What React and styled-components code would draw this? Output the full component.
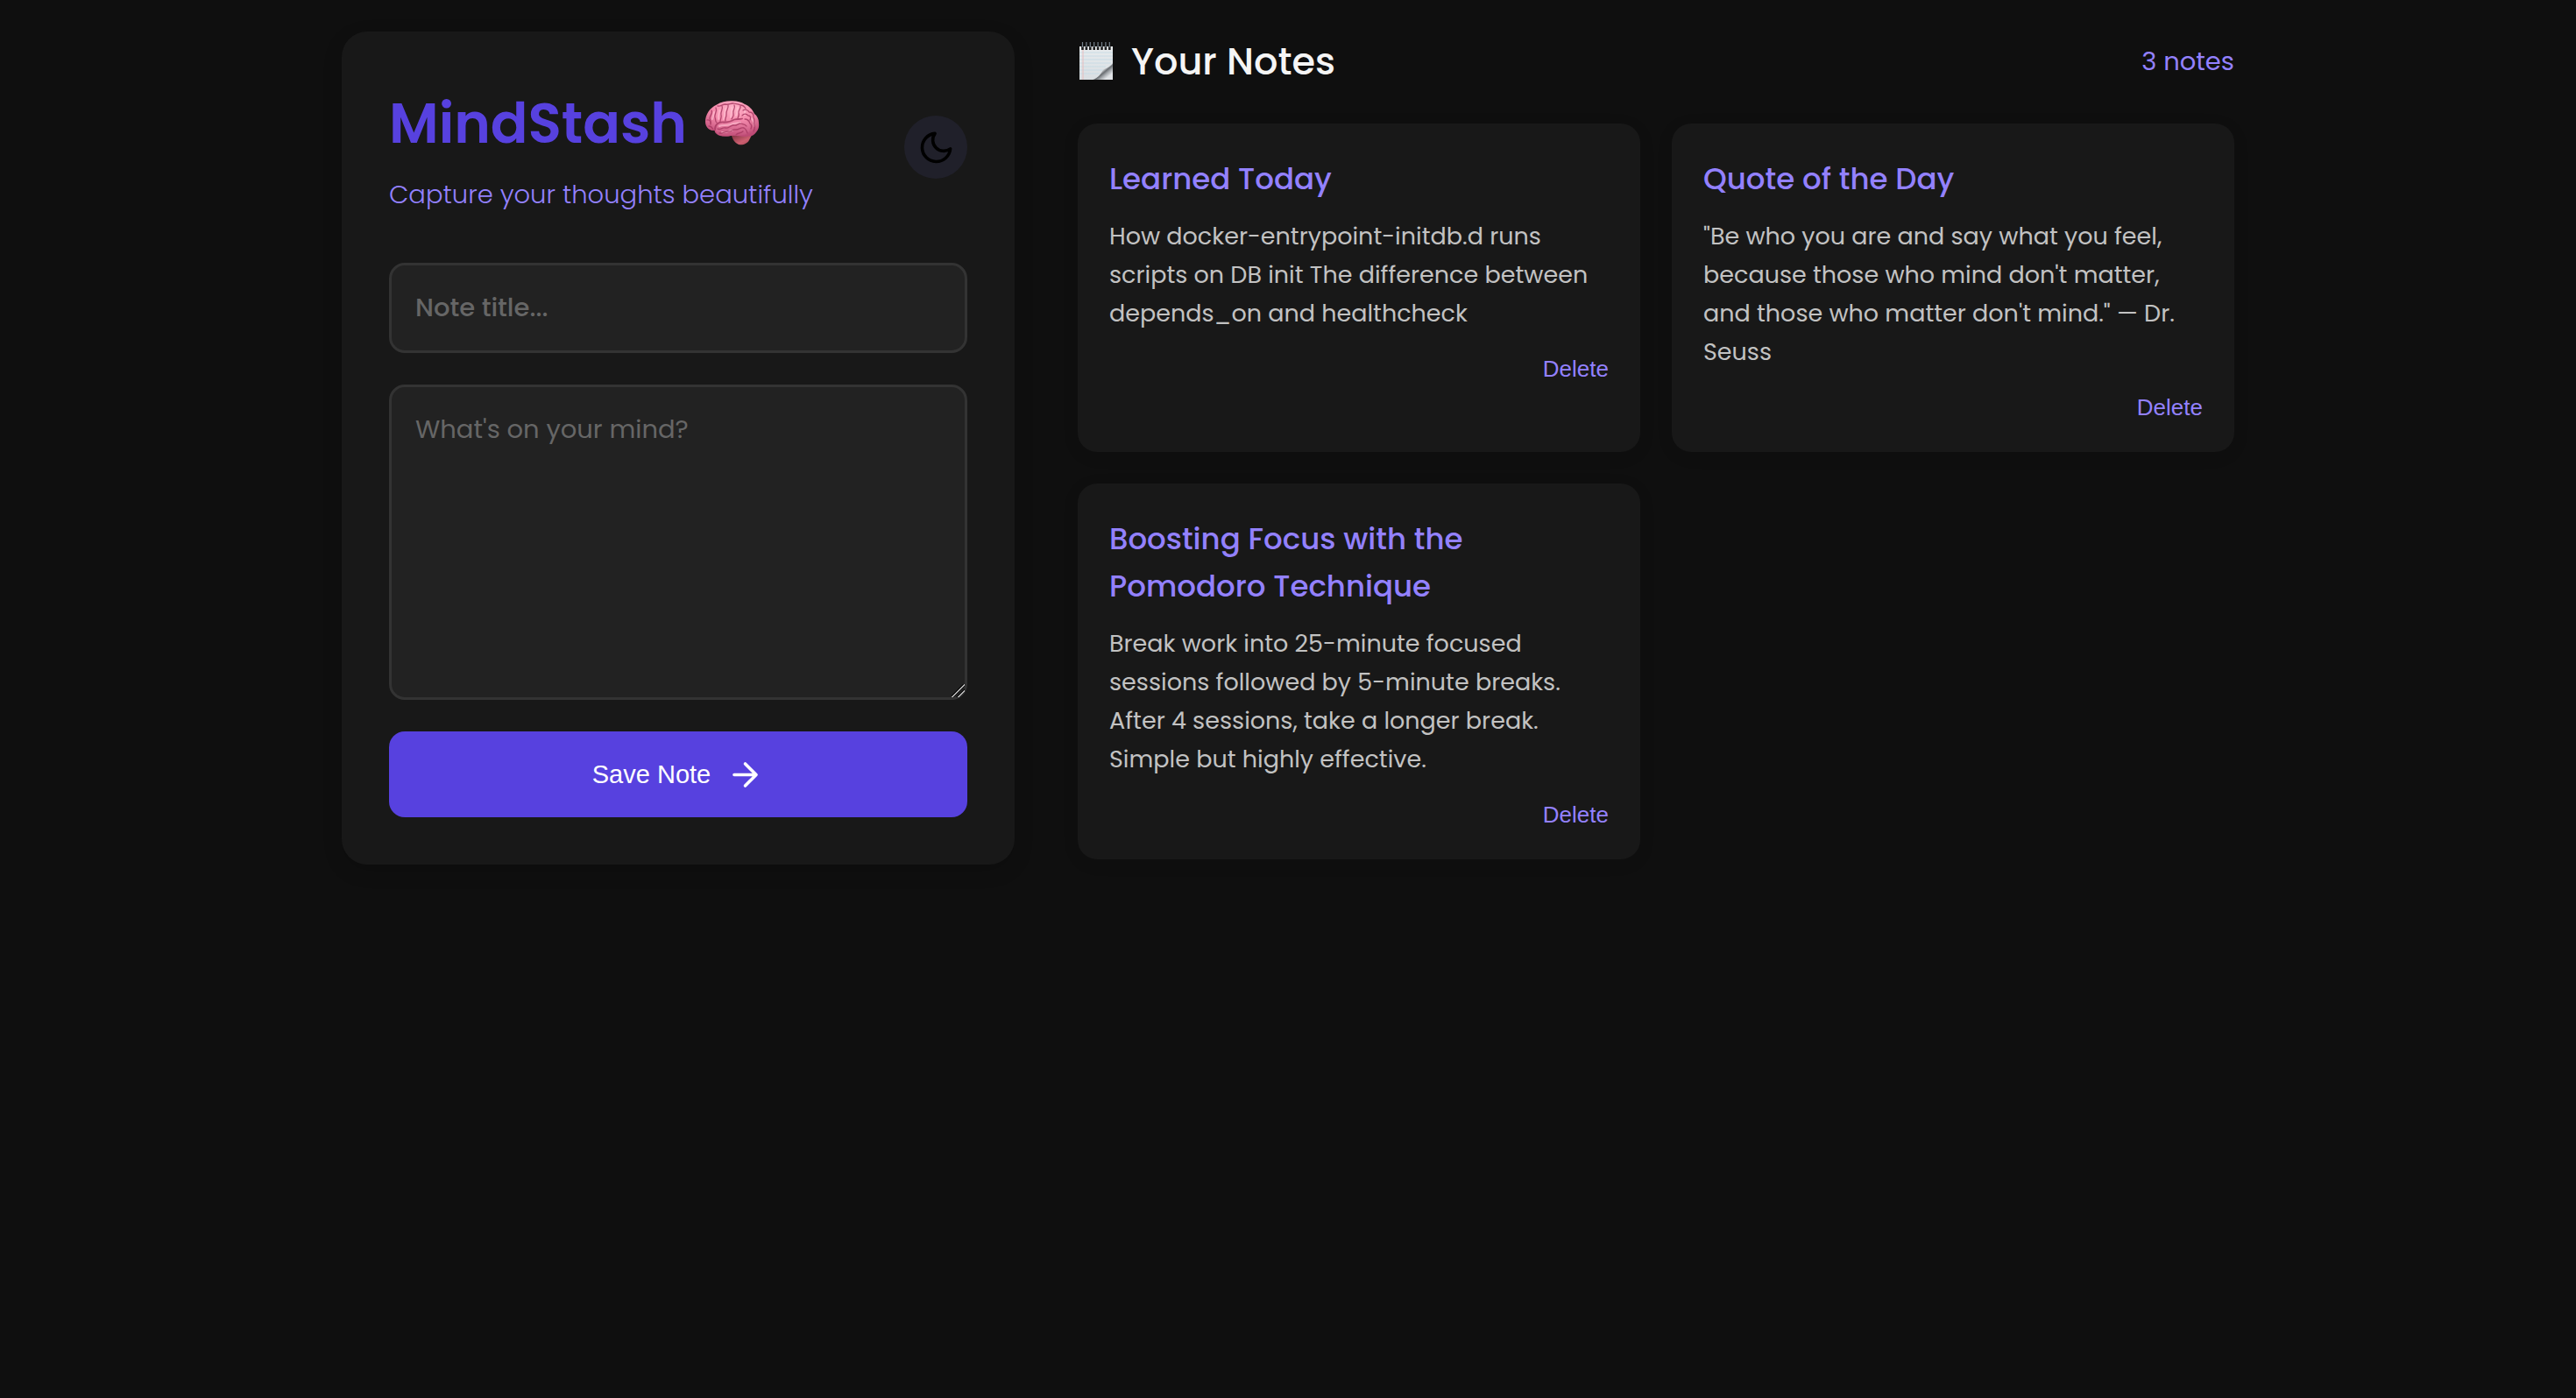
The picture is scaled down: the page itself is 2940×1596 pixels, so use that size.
import React from "react";
import styled, { createGlobalStyle } from "styled-components";

const colors = {
  page: "#0f0f0f",
  panel: "#181818",
  field: "#222222",
  line: "#333333",
  primary: "#5741df",
  accent: "#9381ff",
  heading: "#f5f5f5",
  body: "#c2c2c2",
  hint: "#666666",
  toggle: "#20202a",
};

const GlobalStyle = createGlobalStyle`
  *, *::before, *::after { box-sizing: border-box; margin: 0; padding: 0; }
  body {
    background: ${colors.page};
    color: ${colors.heading};
    font-family: Poppins, Inter, "Open Sans", sans-serif;
    font-size: 29px;
    min-height: 100vh;
  }
`;

const Page = styled.main`
  display: grid;
  grid-template-columns: minmax(0, 768fr) minmax(0, 1320fr);
  gap: 72px;
  align-items: start;
  width: 100%;
  max-width: 2232px;
  margin: 0 auto;
  padding: 36px;
`;

const Panel = styled.section`
  display: flex;
  flex-direction: column;
  padding: 54px;
  border-radius: 29px;
  background: ${colors.panel};
  box-shadow: 0 7px 22px rgba(0, 0, 0, 0.15);
`;

const PanelHeader = styled.header`
  display: flex;
  align-items: center;
  justify-content: space-between;
  margin-bottom: 54px;
`;

const Brand = styled.h1`
  display: flex;
  align-items: center;
  gap: 18px;
  margin-bottom: 6px;
  color: ${colors.primary};
  font-size: 63px;
  font-weight: 600;
  line-height: 102px;
`;

const Tagline = styled.p`
  color: ${colors.accent};
  font-size: 29px;
  font-weight: 300;
  line-height: 48px;
`;

const ThemeToggle = styled.button`
  display: grid;
  place-items: center;
  width: 72px;
  height: 72px;
  border: 0;
  border-radius: 50%;
  background: ${colors.toggle};
  color: #000000;
  cursor: pointer;
`;

const Form = styled.form`
  display: flex;
  flex-direction: column;
  gap: 36px;
`;

const fieldStyle = `
  display: block;
  width: 100%;
  padding: 27px;
  border: 3px solid ${colors.line};
  border-radius: 18px;
  background: ${colors.field};
  color: ${colors.heading};
  font-family: inherit;
  font-size: 29px;
  outline: none;
  &::placeholder { color: ${colors.hint}; opacity: 1; }
`;

const TitleInput = styled.input`
  ${fieldStyle}
  height: 103px;
  font-weight: 500;
`;

const NoteInput = styled.textarea`
  ${fieldStyle}
  height: 360px;
  line-height: 43px;
  resize: vertical;

  &::-webkit-resizer {
    background: linear-gradient(
      135deg,
      transparent 42%,
      #111111 43%,
      #111111 47%,
      #b4b4b4 48%,
      #b4b4b4 54%,
      #111111 55%,
      transparent 60%,
      transparent 66%,
      #111111 67%,
      #111111 71%,
      #b4b4b4 72%,
      #b4b4b4 78%,
      transparent 79%
    );
  }
`;

const SaveButton = styled.button`
  display: flex;
  align-items: center;
  justify-content: center;
  gap: 18px;
  height: 98px;
  border: 0;
  border-radius: 18px;
  background: ${colors.primary};
  color: #ffffff;
  font-family: Arial, "Liberation Sans", sans-serif;
  font-size: 29px;
  font-weight: 400;
  cursor: pointer;
`;

const Notes = styled.section`
  display: flex;
  flex-direction: column;
  gap: 36px;
`;

const NotesHeader = styled.header`
  display: flex;
  align-items: center;
  justify-content: space-between;
  height: 69px;
`;

const NotesTitle = styled.h2`
  display: flex;
  align-items: center;
  gap: 18px;
  font-size: 43px;
  font-weight: 500;
  line-height: 69px;
`;

const Count = styled.span`
  color: ${colors.accent};
  font-size: 29px;
`;

const NoteGrid = styled.div`
  display: grid;
  grid-template-columns: repeat(2, minmax(0, 1fr));
  gap: 36px;
`;

const Card = styled.article`
  display: flex;
  flex-direction: column;
  padding: 36px;
  border-radius: 22px;
  background: ${colors.panel};
  box-shadow: 0 4px 18px rgba(0, 0, 0, 0.1);
`;

const CardTitle = styled.h3`
  margin-bottom: 17px;
  color: ${colors.accent};
  font-size: 34px;
  font-weight: 500;
  line-height: 54px;
`;

const CardText = styled.p`
  margin-bottom: 26px;
  color: ${colors.body};
  font-size: 27px;
  line-height: 44px;
`;

const DeleteButton = styled.button`
  align-self: flex-end;
  border: 0;
  background: none;
  color: ${colors.accent};
  font-family: Arial, "Liberation Sans", sans-serif;
  font-size: 26px;
  line-height: 30px;
  cursor: pointer;
`;

const StrokeIcon = styled.svg`
  width: 43px;
  height: 43px;
  fill: none;
  stroke: currentColor;
  stroke-width: 2;
  stroke-linecap: round;
  stroke-linejoin: round;
`;

const BrainIcon = () => (
  <svg width="66" height="56" viewBox="0 0 66 56" aria-hidden="true">
    <defs>
      <radialGradient id="cortex" cx="0.52" cy="0.2" r="0.8">
        <stop offset="0" stopColor="#ffb3c9" />
        <stop offset="0.5" stopColor="#f58bac" />
        <stop offset="1" stopColor="#bd4a75" />
      </radialGradient>
      <linearGradient id="temporal" x1="0" y1="0" x2="0" y2="1">
        <stop offset="0" stopColor="#f48aad" />
        <stop offset="1" stopColor="#c04f78" />
      </linearGradient>
      <linearGradient id="stem" x1="0" y1="0" x2="1" y2="1">
        <stop offset="0" stopColor="#7d3040" />
        <stop offset="0.6" stopColor="#cc5f70" />
        <stop offset="1" stopColor="#a84758" />
      </linearGradient>
    </defs>
    <path d="M33 42c1 3 3 8 8 10 5 1 10-1 12-5l3-6z" fill="url(#stem)" />
    <path
      d="M11 36C6 35 3 31 3 26 3 18 8 10 16 6.500 21 3 28 2 34 2.300 40 2.300 44 3.500 48 6c5 2 9 6 11 11 3 2 5 6 5 10 .5 4 0 8-3 11-2 3-5 5-9 4.500C46 44 38 41 32 42c-6 1-13 1-16-2-2-1-2-3-2.500-4z"
      fill="url(#cortex)"
    />
    <path
      d="M14.500 33c1-5 5-6 10-6 5 0 8-1 12-3 6-1 12 0 16 4 2 5 2 8-2 12-6 2-12 1-18 2-7 1-13 1-16-3-1.500-2-2-4-2-6z"
      fill="url(#temporal)"
    />
    <g fill="none" stroke="#ffc2d3" strokeWidth="2" strokeLinecap="round" opacity="0.65">
      <path d="M13 15c-1 3-1 5-2 8M19 13c0 4-2 6-1 10M26 11c-1 4-1 8-2 12M33 10c1 3-1 7-1 11M40 10c-1 3 0 6-2 9M48 12c1 2-1 4 0 6M19 31c4-2 8 0 13-2 4-2 8-1 11-2M22 38c5 1 8-2 12-2M56 22c2 3 3 6 3 9" />
    </g>
    <g fill="none" stroke="#a83a63" strokeWidth="1.300" strokeLinecap="round" strokeLinejoin="round" opacity="0.85">
      <path d="M14 35c0-6 4-9 10-8.500 5 0 8-.5 12-3 3-1 6 0 9-1" strokeWidth="1.800" />
      <path d="M10 13c2 3-2 6-2 9 0 2 2 3 1 6M15 10c2 4-2 7-1 11 1 2 0 5 2 6M22 8c2 4-2 6-1 10 1 3-1 5-1 8M29 7c1 4-3 6-2 11 0 3-2 5-1 7M36 7c2 4-2 5-1 9 1 3-1 5-2 7M43 8c1 3-3 5-2 8 1 2 0 4-1 6" />
      <path d="M17 8c4 1 5-2 9-2 4 1 5-1 9-1 3 1 5 0 8 2 3 0 5 2 6 4" />
      <path d="M46 13c3-2 6 0 7 2 3 0 5 2 5 5M45 19c2-3 5-2 7 0 3 0 3 3 2 5M48 23c3 0 5 2 6 5 2 1 2 4 1 6M58 21c2 3 0 5 1 8 1 3 0 6-1 8" />
      <path d="M17 34c3 2 5-2 9-1 4 1 5-3 9-3 4 1 5-2 8-2 3 1 5 0 7 3M19 39c4 1 6-2 10-2 4 1 5-3 9-2 4 0 5-3 9-2 2 1 3 3 4 6M38 41c2-3 5-1 8-4M5 24c3-1 4 2 4 5M7 31c3 0 4 2 5 4" />
    </g>
  </svg>
);

const NotepadIcon = () => (
  <svg width="43" height="46" viewBox="0 0 43 46" aria-hidden="true">
    <defs>
      <linearGradient id="paper" x1="0" y1="0" x2="0" y2="1">
        <stop offset="0" stopColor="#e8ecee" />
        <stop offset="1" stopColor="#d9dee2" />
      </linearGradient>
      <linearGradient id="curl" x1="0" y1="0" x2="1" y2="1">
        <stop offset="0.3" stopColor="#ffffff" />
        <stop offset="0.46" stopColor="#d8dbde" />
        <stop offset="0.56" stopColor="#6a6e72" />
        <stop offset="0.66" stopColor="#a4a8ac" />
        <stop offset="0.8" stopColor="#dfe2e5" />
      </linearGradient>
    </defs>
    <path d="M2 5h38v38H2z" fill="url(#paper)" />
    <path d="M2 12h38M2 16h38M2 20h38M2 24h36M2 28h30M2 32h27M2 36h23" stroke="#c3d9e4" strokeWidth="0.800" />
    <path d="M6 6v37" stroke="#ecb5b5" strokeWidth="0.800" />
    <path d="M17 43c6-2 10-7 12-12 5-1 9-4 11-7v19z" fill="url(#curl)" />
    <path d="M5.500 5v4M9.900 5v4M14.300 5v4M18.700 5v4M23.100 5v4M27.500 5v4M31.900 5v4M36.300 5v4" stroke="#1c1c1c" strokeWidth="2.600" />
    <path d="M5.500 0v6M9.900 0v6M14.300 0v6M18.700 0v6M23.100 0v6M27.500 0v6M31.900 0v6M36.300 0v6" stroke="#77828c" strokeWidth="1.200" />
  </svg>
);

const notes = [
  {
    title: "Learned Today",
    text: "How docker-entrypoint-initdb.d runs scripts on DB init The difference between depends_on and healthcheck",
  },
  {
    title: "Quote of the Day",
    text: "\"Be who you are and say what you feel, because those who mind don't matter, and those who matter don't mind.\" — Dr. Seuss",
  },
  {
    title: "Boosting Focus with the Pomodoro Technique",
    text: "Break work into 25-minute focused sessions followed by 5-minute breaks. After 4 sessions, take a longer break. Simple but highly effective.",
  },
];

export default function App() {
  return (
    <>
      <GlobalStyle />
      <Page>
        <Panel>
          <PanelHeader>
            <div>
              <Brand>
                MindStash <BrainIcon />
              </Brand>
              <Tagline>Capture your thoughts beautifully</Tagline>
            </div>
            <ThemeToggle type="button" aria-label="Toggle theme">
              <StrokeIcon viewBox="0 0 24 24" aria-hidden="true">
                <path d="M21 12.790A9 9 0 1 1 11.210 3 7 7 0 0 0 21 12.790z" />
              </StrokeIcon>
            </ThemeToggle>
          </PanelHeader>
          <Form onSubmit={(event) => event.preventDefault()}>
            <TitleInput type="text" aria-label="Note title" placeholder="Note title..." />
            <NoteInput aria-label="Note text" placeholder="What's on your mind?" />
            <SaveButton type="submit">
              Save Note
              <StrokeIcon viewBox="0 0 24 24" aria-hidden="true">
                <path d="M5 12h14M12 5l7 7-7 7" />
              </StrokeIcon>
            </SaveButton>
          </Form>
        </Panel>
        <Notes>
          <NotesHeader>
            <NotesTitle>
              <NotepadIcon /> Your Notes
            </NotesTitle>
            <Count>{notes.length} notes</Count>
          </NotesHeader>
          <NoteGrid>
            {notes.map((note) => (
              <Card key={note.title}>
                <CardTitle>{note.title}</CardTitle>
                <CardText>{note.text}</CardText>
                <DeleteButton type="button">Delete</DeleteButton>
              </Card>
            ))}
          </NoteGrid>
        </Notes>
      </Page>
    </>
  );
}
